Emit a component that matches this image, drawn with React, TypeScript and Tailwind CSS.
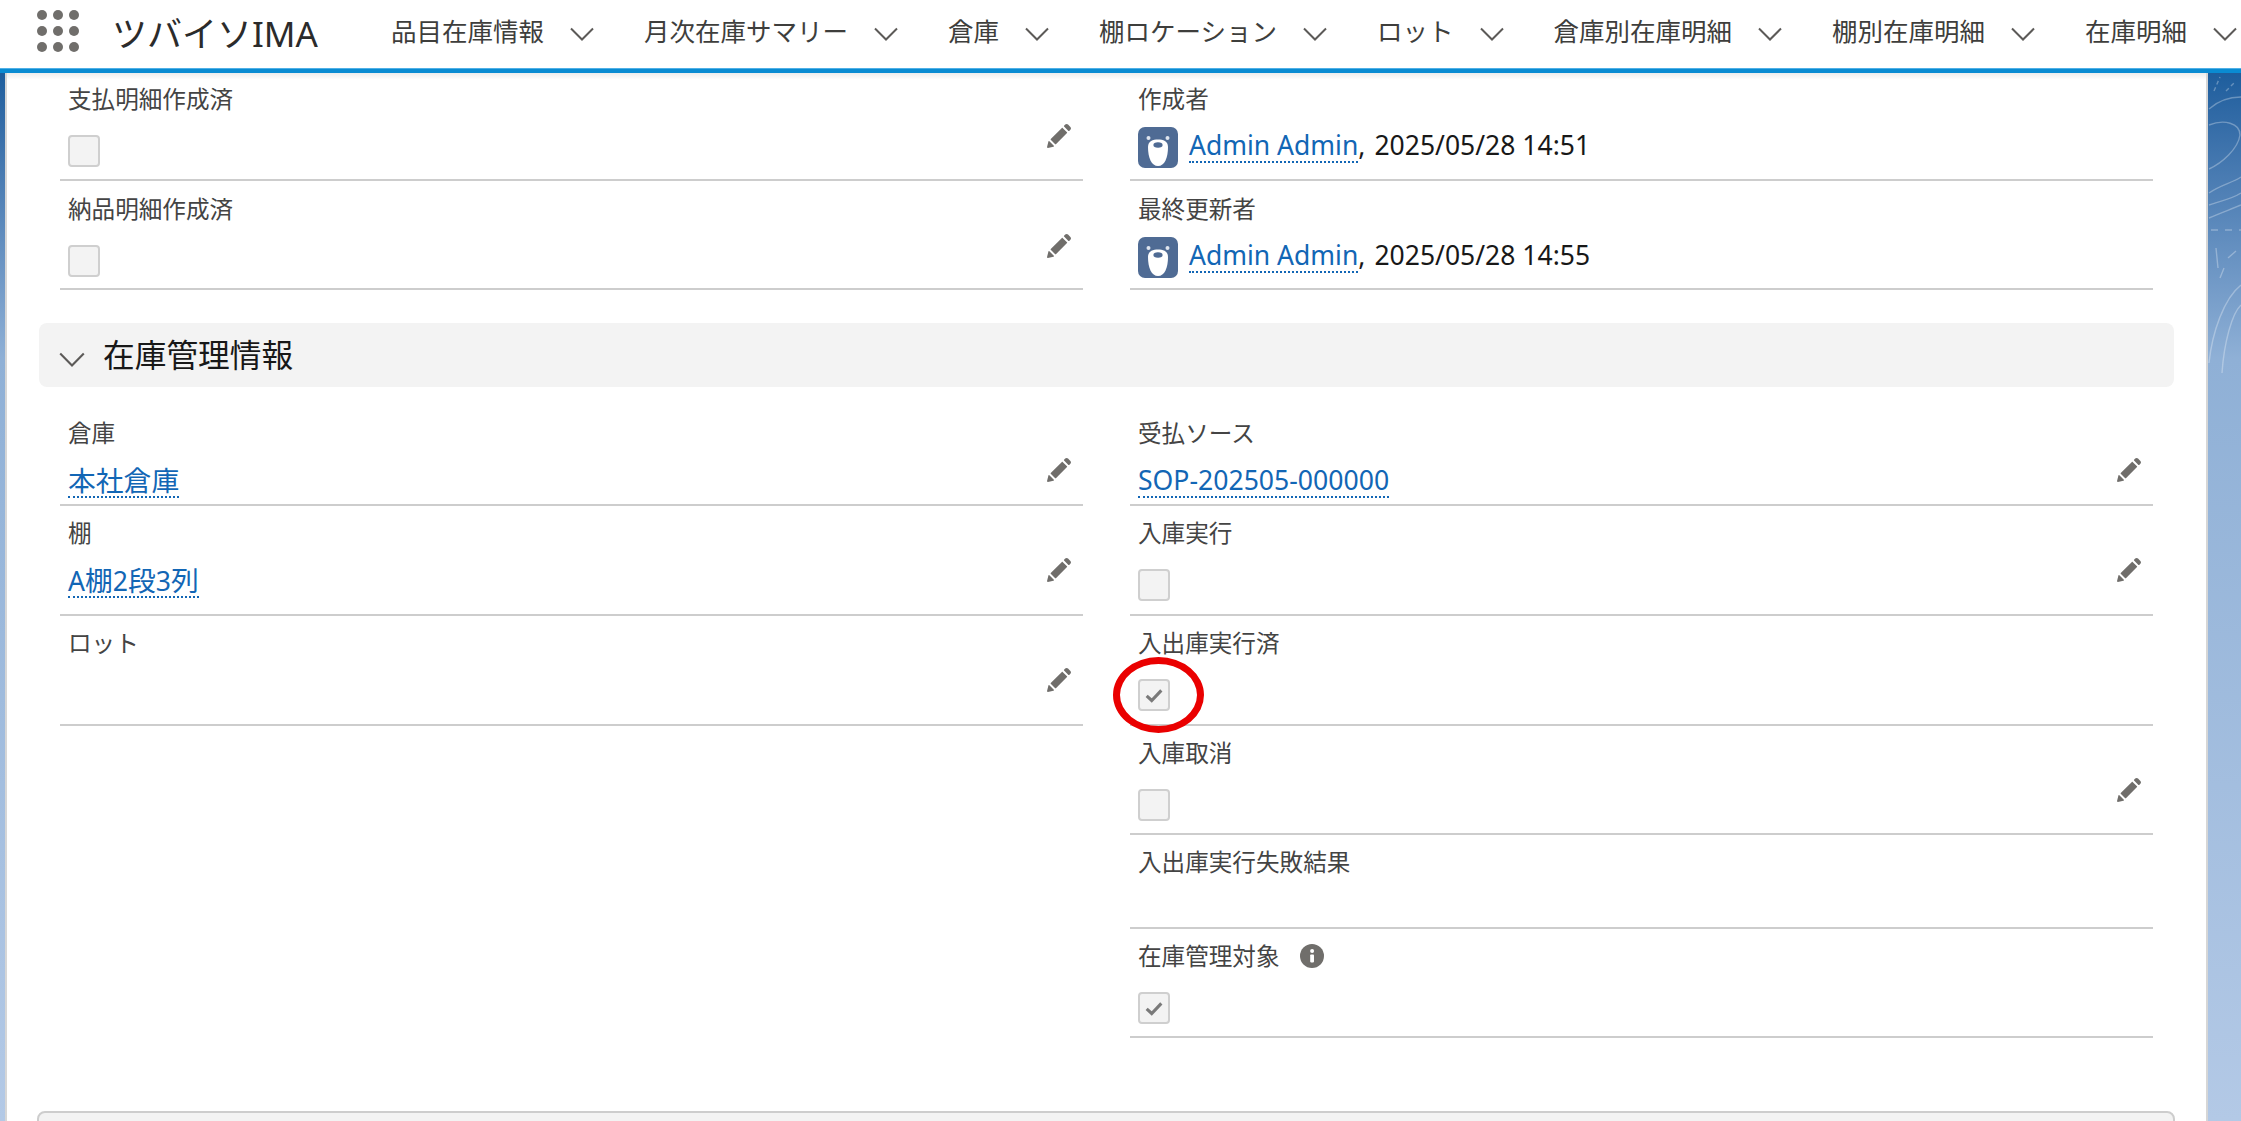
import React from "react";

const navItems = ["品目在庫情報", "月次在庫サマリー", "倉庫", "棚ロケーション", "ロット", "倉庫別在庫明細", "棚別在庫明細", "在庫明細"];

function Chevron({ className }: { className: string }) {
  return (
    <svg viewBox="0 0 24 14" className={className} fill="none" stroke="#5c5a58" strokeWidth="2">
      <path d="M1 1.5 L12 12.5 L23 1.5" />
    </svg>
  );
}

function Pencil() {
  return (
    <svg viewBox="0 0 52 52" className="w-[26px] h-[26px] mt-[40px] mr-[11px] shrink-0" fill="#706e6b">
      <path d="M9.5 33.4l8.9 8.9c.4.4 1 .4 1.4 0L42 20c.4-.4.4-1 0-1.4l-8.8-8.8c-.4-.4-1-.4-1.4 0L9.5 32.1c-.4.4-.4 1 0 1.3zM36.1 5.7c-.4.4-.4 1 0 1.4l8.8 8.8c.4.4 1 .4 1.4 0l2.5-2.5c1.6-1.5 1.6-3.9 0-5.5l-4.7-4.7c-1.6-1.6-4.1-1.6-5.7 0l-2.3 2.5zM2.1 48.2c-.2 1 .7 1.9 1.7 1.7l10.9-2.6c.4-.1.7-.3.9-.5l.2-.2c.2-.2.3-.9-.1-1.3l-9-9c-.4-.4-1.1-.3-1.3-.1l-.2.2c-.3.3-.4.6-.5.9L2.1 48.2z" />
    </svg>
  );
}

function Checkbox({ checked }: { checked?: boolean }) {
  return (
    <div className="mt-[20px] w-[32px] h-[32px] rounded-[4px] border-2 border-[#cfcfcf] bg-[#f3f3f3] flex items-center justify-center">
      {checked && (
        <svg viewBox="0 0 24 24" className="w-[22px] h-[22px]" fill="none" stroke="#7a7a7a" strokeWidth="3.4">
          <path d="M4 13 L9.5 18 L20 7" />
        </svg>
      )}
    </div>
  );
}

function Avatar() {
  return (
    <svg viewBox="0 0 40 41" className="w-[40px] h-[41px] shrink-0">
      <rect width="40" height="41" rx="7" fill="#4f6b94" />
      <circle cx="10.5" cy="11" r="2" fill="#dfe5ee" />
      <circle cx="29.5" cy="11" r="2" fill="#dfe5ee" />
      <path d="M10 20 C10 14 15 12.5 20 12.5 C25 12.5 30 14 30 20 C30 31 26.5 39 20 39 C13.5 39 10 31 10 20 Z" fill="#ffffff" />
      <ellipse cx="20" cy="18" rx="4.6" ry="2.8" fill="#4f6b94" />
    </svg>
  );
}

function Link({ children }: { children: React.ReactNode }) {
  return (
    <span className="text-[#1266b5] border-b-2 border-dotted border-[#1266b5] leading-[36px] inline-block h-[36px]">{children}</span>
  );
}

function Field({
  label,
  h,
  pt = "pt-[11px]",
  edit,
  info,
  children,
}: {
  label: string;
  h: string;
  pt?: string;
  edit?: boolean;
  info?: boolean;
  children?: React.ReactNode;
}) {
  return (
    <div className={`${h} ${pt} relative flex justify-between items-start border-b-2 border-[#cdcdcd] pl-[8px]`}>
      <div className="flex flex-col">
        <div className="flex items-center h-[32px] text-[23.6px] leading-[32px] text-[#444444]">
          {label}
          {info && (
            <svg viewBox="0 0 24 24" className="w-[24px] h-[24px] ml-[20px]">
              <circle cx="12" cy="12" r="12" fill="#706e6b" />
              <rect x="10.2" y="10.4" width="3.8" height="8" rx="0.8" fill="#fff" />
              <circle cx="12.1" cy="6.9" r="2" fill="#fff" />
            </svg>
          )}
        </div>
        {children}
      </div>
      {edit && <Pencil />}
    </div>
  );
}

function TextValue({ children }: { children: React.ReactNode }) {
  return <div className="mt-[11px] h-[40px] flex items-center text-[26.6px] leading-[36px]">{children}</div>;
}

function UserValue({ date }: { date: string }) {
  return (
    <div className="mt-[12px] flex items-start gap-[11px] text-[26.5px] text-[#181818]">
      <Avatar />
      <div className="h-[36px] leading-[36px]">
        <Link>Admin Admin</Link>
        <span>,</span>
        <span className="ml-[9px]">{date}</span>
      </div>
    </div>
  );
}

function Cjk({ children }: { children: React.ReactNode }) {
  return <span className="text-[27.8px]">{children}</span>;
}

export default function App() {
  return (
    <div
      className="relative w-[2241px] h-[1121px] overflow-hidden flex flex-col bg-gradient-to-b from-[#1a5c9c] from-[6%] via-[#8fb0d6] via-[32%] to-[#b3c9e6] to-[100%]"
      style={{ fontFamily: '"Noto Sans","Noto Sans CJK JP",sans-serif' }}
    >
      <header className="relative z-10 shrink-0 h-[73px] bg-white flex flex-col">
        <div className="h-[68px] flex items-start">
          <svg viewBox="0 0 42 42" className="ml-[37px] mt-[10px] w-[42px] h-[42px] shrink-0" fill="#706e6b">
            {[5, 21, 37].flatMap((y) => [5, 21, 37].map((x) => <circle key={`${x}-${y}`} cx={x} cy={y} r="5" />))}
          </svg>
          <div className="ml-[33px] mt-[10px] w-[279px] shrink-0 text-[35px] leading-[48px] text-[#2b2b2b] whitespace-nowrap">ツバイソIMA</div>
          <nav className="flex items-start whitespace-nowrap">
            {navItems.map((n) => (
              <div key={n} className="flex items-start shrink-0 mr-[50px]">
                <span className="mt-[13px] text-[25.5px] leading-[36px] text-[#3e3e3c]">{n}</span>
                <Chevron className="ml-[26px] mt-[27px] w-[24px] h-[14px]" />
              </div>
            ))}
          </nav>
        </div>
        <div className="h-[5px] bg-[#0a8bd2] border-t border-[#4fb0e6]" />
      </header>

      <svg
        viewBox="0 0 33 300"
        className="absolute left-[2208px] top-[73px] w-[33px] h-[300px]"
        fill="none"
        stroke="#ffffff"
        strokeOpacity="0.3"
        strokeWidth="1.4"
      >
        <path d="M6 18 L12 4 M18 18 L26 10" strokeDasharray="4 3" />
        <path d="M1 36 C10 28 22 24 33 24" />
        <path d="M1 96 C14 90 30 76 32 62 C32 50 16 46 1 52" />
        <path d="M1 120 C12 112 24 110 33 104" />
        <path d="M1 132 C12 128 24 126 33 120" />
        <path d="M1 145 C12 140 24 136 33 132" />
        <path d="M3 157 H33" strokeDasharray="7 7" />
        <path d="M8 175 L10 195 M20 185 L28 178 M12 205 L16 195" />
        <path d="M1 290 C4 260 16 225 33 212" />
        <path d="M14 300 C16 270 24 240 33 232" />
      </svg>

      <main className="relative flex-1 ml-[5px] w-[2203px] bg-white border-x-2 border-[#d6d6d6] overflow-hidden">
        <div className="h-[7px] absolute inset-x-0 top-0 bg-gradient-to-b from-[#ececec] to-white" />
        <div className="relative grid grid-cols-[1023px_1023px] gap-x-[47px] pl-[53px]">
          <div>
            <Field label="支払明細作成済" h="h-[108px]" pt="pt-[10px]" edit>
              <Checkbox />
            </Field>
            <Field label="納品明細作成済" h="h-[109px]" pt="pt-[12px]" edit>
              <Checkbox />
            </Field>
          </div>
          <div>
            <Field label="作成者" h="h-[108px]" pt="pt-[10px]">
              <UserValue date="2025/05/28 14:51" />
            </Field>
            <Field label="最終更新者" h="h-[109px]" pt="pt-[12px]">
              <UserValue date="2025/05/28 14:55" />
            </Field>
          </div>
        </div>

        <div className="mt-[33px] ml-[32px] w-[2135px] h-[64px] rounded-[8px] bg-[#f3f3f3] flex items-center">
          <Chevron className="ml-[19px] mt-[8px] w-[28px] h-[15px]" />
          <span className="ml-[17px] text-[31.7px] leading-[44px] text-[#181818]">在庫管理情報</span>
        </div>

        <div className="mt-[18px] grid grid-cols-[1023px_1023px] gap-x-[47px] pl-[53px] items-start">
          <div>
            <Field label="倉庫" h="h-[101px]" pt="pt-[12px]" edit>
              <TextValue>
                <Link>
                  <Cjk>本社倉庫</Cjk>
                </Link>
              </TextValue>
            </Field>
            <Field label="棚" h="h-[110px]" edit>
              <TextValue>
                <Link>
                  A<Cjk>棚</Cjk>2<Cjk>段</Cjk>3<Cjk>列</Cjk>
                </Link>
              </TextValue>
            </Field>
            <Field label="ロット" h="h-[110px]" edit />
          </div>
          <div>
            <Field label="受払ソース" h="h-[101px]" pt="pt-[12px]" edit>
              <TextValue>
                <Link>SOP-202505-000000</Link>
              </TextValue>
            </Field>
            <Field label="入庫実行" h="h-[110px]" edit>
              <Checkbox />
            </Field>
            <Field label="入出庫実行済" h="h-[110px]">
              <Checkbox checked />
              <div className="absolute left-[-17px] top-[41px] w-[91px] h-[76px] rounded-[50%] border-[7px] border-[#ea0000]" />
            </Field>
            <Field label="入庫取消" h="h-[109px]" edit>
              <Checkbox />
            </Field>
            <Field label="入出庫実行失敗結果" h="h-[94px]" />
            <Field label="在庫管理対象" h="h-[109px]" info>
              <Checkbox checked />
            </Field>
          </div>
        </div>

        <div className="mt-[73px] ml-[30px] w-[2138px] h-[40px] rounded-t-[8px] border-2 border-[#cdcdcd] bg-[#f3f3f3]" />
      </main>
    </div>
  );
}
